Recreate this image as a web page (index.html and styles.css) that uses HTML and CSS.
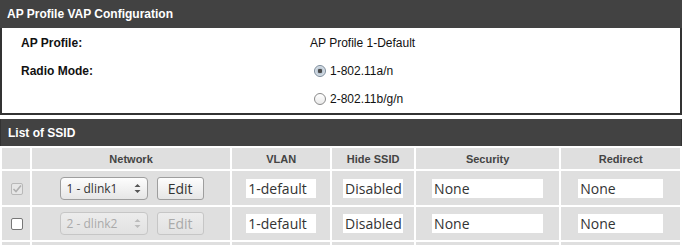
FILE: index.html
```html
<!DOCTYPE html>
<html lang="en">
<head>
    <meta charset="UTF-8">
    <title>AP Profile VAP Configuration</title>
    <link rel="stylesheet" href="styles.css">
</head>
<body>
    <div class="panel panel-top">
        <div class="panel-title">AP Profile VAP Configuration</div>
        <div class="info">
            <div class="info-label">AP Profile:</div>
            <div class="info-value">AP Profile 1-Default</div>

            <div class="info-label">Radio Mode:</div>
            <div class="info-value radio-row"><span class="radio checked"></span>1-802.11a/n</div>

            <div class="info-label"></div>
            <div class="info-value radio-row"><span class="radio"></span>2-802.11b/g/n</div>
        </div>
    </div>

    <div class="panel panel-list">
        <div class="panel-title">List of SSID</div>
        <table class="ssid-table">
            <colgroup>
                <col class="c-check">
                <col class="c-network">
                <col class="c-vlan">
                <col class="c-hide">
                <col class="c-security">
                <col class="c-redirect">
            </colgroup>
            <thead>
                <tr>
                    <th></th>
                    <th>Network</th>
                    <th>VLAN</th>
                    <th>Hide SSID</th>
                    <th>Security</th>
                    <th>Redirect</th>
                </tr>
            </thead>
            <tbody>
                <tr class="row1">
                    <td><span class="check checked disabled"><svg width="10" height="10" viewBox="0 0 10 10"><path d="M1.5 5 L4 7.5 L9 1.5" fill="none" stroke="#b0b0b0" stroke-width="1.6"/></svg></span></td>
                    <td>
                        <div class="network">
                            <span class="select">1 - dlink1<svg class="arrows" width="7" height="11" viewBox="0 0 7 11"><path d="M0.5 4 L3.5 1 L6.5 4 Z M0.5 7 L3.5 10 L6.5 7 Z" fill="#555"/></svg></span>
                            <span class="btn">Edit</span>
                        </div>
                    </td>
                    <td><span class="field f-vlan">1-default</span></td>
                    <td><span class="field f-hide">Disabled</span></td>
                    <td><span class="field f-security">None</span></td>
                    <td><span class="field f-redirect">None</span></td>
                </tr>
                <tr class="row2">
                    <td><span class="check"></span></td>
                    <td>
                        <div class="network">
                            <span class="select disabled">2 - dlink2<svg class="arrows" width="7" height="11" viewBox="0 0 7 11"><path d="M0.5 4 L3.5 1 L6.5 4 Z M0.5 7 L3.5 10 L6.5 7 Z" fill="#bbb"/></svg></span>
                            <span class="btn disabled">Edit</span>
                        </div>
                    </td>
                    <td><span class="field f-vlan">1-default</span></td>
                    <td><span class="field f-hide">Disabled</span></td>
                    <td><span class="field f-security">None</span></td>
                    <td><span class="field f-redirect">None</span></td>
                </tr>
                <tr class="row2">
                    <td></td>
                    <td></td>
                    <td></td>
                    <td></td>
                    <td></td>
                    <td></td>
                </tr>
            </tbody>
        </table>
    </div>
</body>
</html>
```

FILE: styles.css
```css
body {
    margin: 0;
    font-family: "Liberation Sans", Arial, sans-serif;
    font-size: 12px;
    color: #111;
    background-color: #fff;
}
.panel {
    border: 1px solid #333;
}
.panel-top {
    border-width: 2px;
    border-top: 0;
}
.panel-title {
    height: 28px;
    line-height: 28px;
    padding-left: 7px;
    background-color: #424242;
    color: #fff;
    font-weight: bold;
    font-size: 12px;
}
.panel-top .panel-title {
    margin-left: -2px;
    margin-right: -2px;
    padding-left: 7px;
}
.info {
    display: grid;
    grid-template-columns: 289px 1fr;
    grid-auto-rows: 28px;
    padding: 1px 0 0 19px;
}
.info-label,
.info-value {
    display: flex;
    align-items: center;
}
.info-label {
    font-weight: bold;
}
.radio-row {
    padding-left: 4px;
    gap: 4px;
}
.radio {
    display: inline-block;
    box-sizing: border-box;
    width: 12px;
    height: 12px;
    border: 1px solid #8a8a8a;
    border-radius: 50%;
    background: linear-gradient(#fff, #e9e9e9);
}
.radio.checked {
    border-color: #7a8a9a;
    background: radial-gradient(circle, #4a4a4a 0, #4a4a4a 2px, #b9c6d3 2.5px, #dde4ea 5px);
}

.panel-list {
    margin-top: 4px;
    border-top: 0;
}
.ssid-table {
    table-layout: fixed;
    width: 682px;
    margin: -1px 0 0 -1px;
    border-spacing: 2px;
    background-color: #fff;
}
.c-check { width: 28px; }
.c-network { width: 197px; }
.c-vlan { width: 98px; }
.c-hide { width: 81px; }
.c-security { width: 143px; }
.c-redirect { width: 118px; }
.ssid-table th,
.ssid-table td {
    padding: 0;
    background-color: #dfdfdf;
    text-align: center;
}
.ssid-table th {
    height: 21px;
    font-size: 11px;
    font-weight: bold;
    color: #444;
}
.row1 td { height: 34px; }
.row2 td { height: 33px; }

.check {
    display: inline-flex;
    align-items: center;
    justify-content: center;
    box-sizing: border-box;
    width: 12px;
    height: 12px;
    margin-left: 2px;
    border: 1px solid #777;
    border-radius: 2px;
    background-color: #fff;
    vertical-align: middle;
}
.check.disabled {
    border-color: #b8b8b8;
    background-color: #e6e6e6;
}
.network {
    display: flex;
    justify-content: center;
    gap: 9px;
    padding-left: 1px;
}
.select,
.btn {
    display: inline-flex;
    align-items: center;
    box-sizing: border-box;
    height: 23px;
    font-family: "Open Sans", "DejaVu Sans", sans-serif;
    color: #333;
    border: 1px solid #9e9e9e;
    border-radius: 4px;
    background: linear-gradient(#fdfdfd, #e6e6e6);
}
.select {
    width: 88px;
    padding: 0 6px;
    font-size: 12px;
    justify-content: space-between;
}
.btn {
    width: 47px;
    justify-content: center;
    font-size: 14px;
    border-radius: 3px;
}
.select.disabled,
.btn.disabled {
    color: #aaa;
    border-color: #c6c6c6;
    background: linear-gradient(#ececec, #e2e2e2);
}
.field {
    display: inline-block;
    box-sizing: border-box;
    height: 19px;
    line-height: 19px;
    padding-left: 2px;
    background-color: #fff;
    font-family: "Open Sans", "DejaVu Sans", sans-serif;
    font-size: 14px;
    color: #333;
    text-align: left;
    vertical-align: middle;
}
.f-vlan { width: 70px; }
.f-hide { width: 60px; }
.f-security { width: 111px; }
.f-redirect { width: 85px; }
```
